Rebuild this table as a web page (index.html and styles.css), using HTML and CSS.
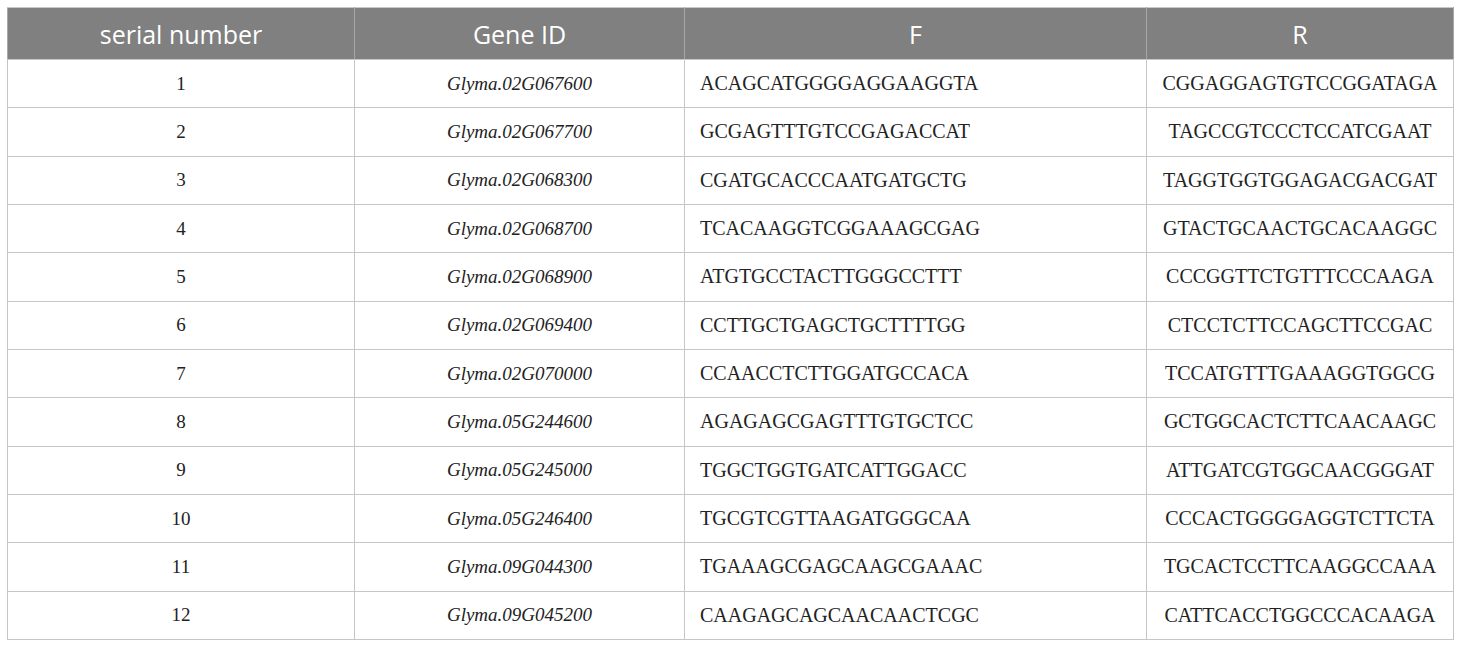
FILE: index.html
```html
<!DOCTYPE html>
<html lang="en">
<head>
<meta charset="utf-8">
<title>Primers</title>
<link rel="stylesheet" href="styles.css">
</head>
<body>
<table class="primers">
  <colgroup>
    <col class="c-num"><col class="c-gene"><col class="c-f"><col class="c-r">
  </colgroup>
  <thead>
    <tr><th>serial number</th><th>Gene ID</th><th>F</th><th>R</th></tr>
  </thead>
  <tbody>
    <tr><td class="num">1</td><td class="gene">Glyma.02G067600</td><td class="f">ACAGCATGGGGAGGAAGGTA</td><td class="r">CGGAGGAGTGTCCGGATAGA</td></tr>
    <tr><td class="num">2</td><td class="gene">Glyma.02G067700</td><td class="f">GCGAGTTTGTCCGAGACCAT</td><td class="r">TAGCCGTCCCTCCATCGAAT</td></tr>
    <tr><td class="num">3</td><td class="gene">Glyma.02G068300</td><td class="f">CGATGCACCCAATGATGCTG</td><td class="r">TAGGTGGTGGAGACGACGAT</td></tr>
    <tr><td class="num">4</td><td class="gene">Glyma.02G068700</td><td class="f">TCACAAGGTCGGAAAGCGAG</td><td class="r">GTACTGCAACTGCACAAGGC</td></tr>
    <tr><td class="num">5</td><td class="gene">Glyma.02G068900</td><td class="f">ATGTGCCTACTTGGGCCTTT</td><td class="r">CCCGGTTCTGTTTCCCAAGA</td></tr>
    <tr><td class="num">6</td><td class="gene">Glyma.02G069400</td><td class="f">CCTTGCTGAGCTGCTTTTGG</td><td class="r">CTCCTCTTCCAGCTTCCGAC</td></tr>
    <tr><td class="num">7</td><td class="gene">Glyma.02G070000</td><td class="f">CCAACCTCTTGGATGCCACA</td><td class="r">TCCATGTTTGAAAGGTGGCG</td></tr>
    <tr><td class="num">8</td><td class="gene">Glyma.05G244600</td><td class="f">AGAGAGCGAGTTTGTGCTCC</td><td class="r">GCTGGCACTCTTCAACAAGC</td></tr>
    <tr><td class="num">9</td><td class="gene">Glyma.05G245000</td><td class="f">TGGCTGGTGATCATTGGACC</td><td class="r">ATTGATCGTGGCAACGGGAT</td></tr>
    <tr><td class="num">10</td><td class="gene">Glyma.05G246400</td><td class="f">TGCGTCGTTAAGATGGGCAA</td><td class="r">CCCACTGGGGAGGTCTTCTA</td></tr>
    <tr><td class="num">11</td><td class="gene">Glyma.09G044300</td><td class="f">TGAAAGCGAGCAAGCGAAAC</td><td class="r">TGCACTCCTTCAAGGCCAAA</td></tr>
    <tr><td class="num">12</td><td class="gene">Glyma.09G045200</td><td class="f">CAAGAGCAGCAACAACTCGC</td><td class="r">CATTCACCTGGCCCACAAGA</td></tr>
  </tbody>
</table>
</body>
</html>
```
FILE: styles.css
```css
html, body {
  margin: 0;
  background: #ffffff;
}
body {
  padding: 7px 0 0 7px;
}
.primers {
  border-collapse: collapse;
  table-layout: fixed;
  width: 1446px;
  font-family: "Liberation Serif", "Times New Roman", serif;
  color: #222222;
}
.c-num { width: 347px; }
.c-gene { width: 330px; }
.c-f { width: 462px; }
.c-r { width: 307px; }
.primers th {
  background: #808080;
  color: #ffffff;
  font-family: "Open Sans", "Noto Sans", sans-serif;
  font-weight: 400;
  font-size: 25px;
  height: 51px;
  padding: 0;
  text-align: center;
  vertical-align: middle;
  border: 1px solid #a8a8a8;
  border-top-color: #c8c8c8;
  border-bottom-color: #c8c8c8;
}
.primers td {
  height: 48.33px;
  padding: 0;
  font-size: 20px;
  vertical-align: middle;
  border: 1px solid #c6c6c6;
  box-sizing: border-box;
}
.primers td.num { text-align: center; font-size: 19px; }
.primers td.gene { text-align: center; font-style: italic; font-size: 19px; }
.primers td.f { text-align: left; padding-left: 15px; }
.primers td.r { text-align: center; }
```
